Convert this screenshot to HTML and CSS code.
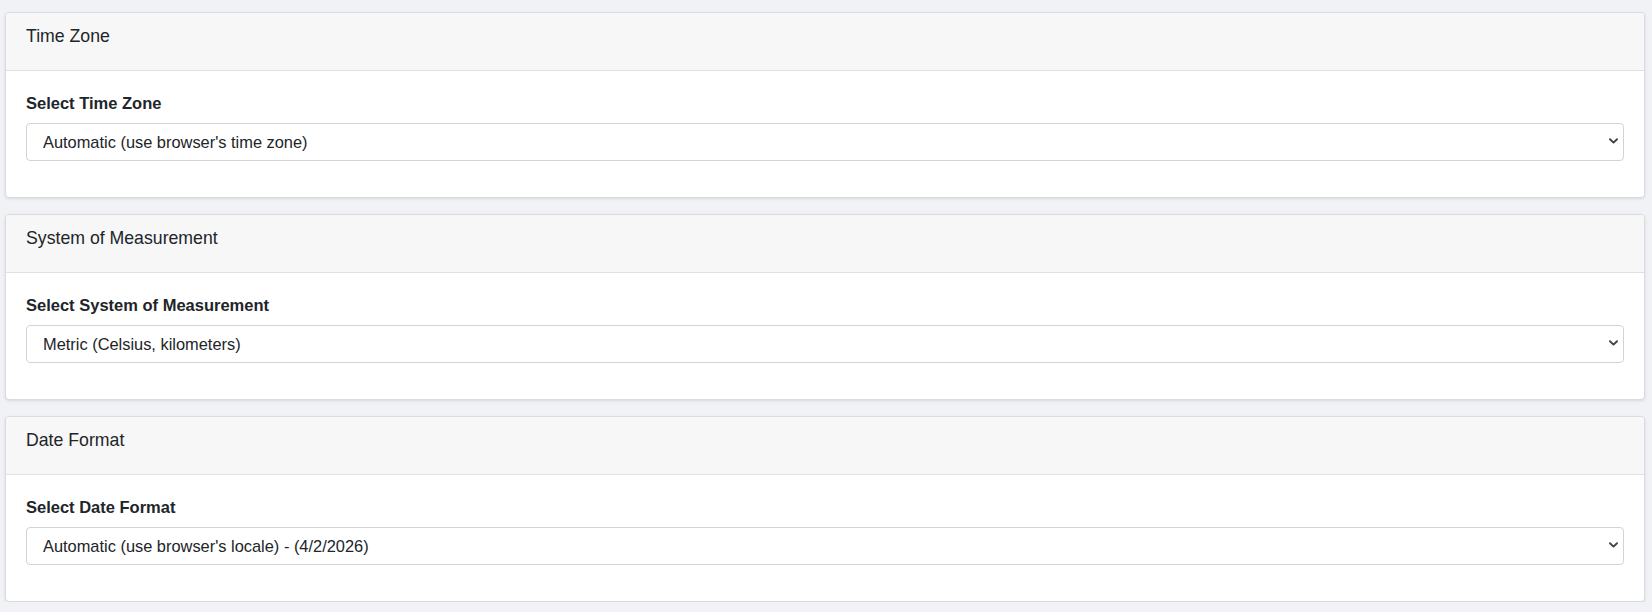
FILE: index.html
```html
<!DOCTYPE html>
<html lang="en">
<head>
<meta charset="utf-8">
<title>Settings</title>
<link rel="stylesheet" href="styles.css">
</head>
<body>
<main class="page">
  <section class="card">
    <header class="card-header">Time Zone</header>
    <div class="card-body">
      <label class="field-label" for="tz">Select Time Zone</label>
      <div class="select-wrap">
        <select id="tz" class="select">
          <option>Automatic (use browser's time zone)</option>
        </select>
        <svg class="chevron" width="9" height="6" viewBox="0 0 9 6" aria-hidden="true"><path d="M1 1.2 L4.5 4.6 L8 1.2" fill="none" stroke="#3f444a" stroke-width="1.9" stroke-linecap="round" stroke-linejoin="round"/></svg>
      </div>
    </div>
  </section>
  <section class="card">
    <header class="card-header">System of Measurement</header>
    <div class="card-body">
      <label class="field-label" for="sm">Select System of Measurement</label>
      <div class="select-wrap">
        <select id="sm" class="select">
          <option>Metric (Celsius, kilometers)</option>
        </select>
        <svg class="chevron" width="9" height="6" viewBox="0 0 9 6" aria-hidden="true"><path d="M1 1.2 L4.5 4.6 L8 1.2" fill="none" stroke="#3f444a" stroke-width="1.9" stroke-linecap="round" stroke-linejoin="round"/></svg>
      </div>
    </div>
  </section>
  <section class="card">
    <header class="card-header">Date Format</header>
    <div class="card-body">
      <label class="field-label" for="df">Select Date Format</label>
      <div class="select-wrap">
        <select id="df" class="select">
          <option>Automatic (use browser's locale) - (4/2/2026)</option>
        </select>
        <svg class="chevron" width="9" height="6" viewBox="0 0 9 6" aria-hidden="true"><path d="M1 1.2 L4.5 4.6 L8 1.2" fill="none" stroke="#3f444a" stroke-width="1.9" stroke-linecap="round" stroke-linejoin="round"/></svg>
      </div>
    </div>
  </section>
</main>
</body>
</html>
```

FILE: styles.css
```css
* { box-sizing: border-box; }

html, body {
  margin: 0;
  padding: 0;
  background: #f1f2f6;
  font-family: "Liberation Sans", Arial, Helvetica, sans-serif;
  color: #212529;
}

.page {
  padding: 12px 7px 0 5px;
  display: flex;
  flex-direction: column;
  gap: 16px;
}

.card {
  background: #ffffff;
  border: 1px solid #dadbde;
  border-radius: 4px;
  box-shadow: 0 1px 3px rgba(0, 0, 0, 0.1);
  overflow: hidden;
}

.card-header {
  background: #f7f7f7;
  border-bottom: 1px solid #dfe0e2;
  padding: 11px 20px 22px;
  font-size: 17.7px;
  line-height: 24px;
}

.card-body {
  padding: 20px 20px 36px;
}

.field-label {
  display: block;
  font-size: 16.5px;
  font-weight: bold;
  line-height: 24px;
  margin-bottom: 8px;
}

.select-wrap {
  position: relative;
}

.select {
  display: block;
  width: 100%;
  height: 38px;
  margin: 0;
  padding: 0 32px 0 16px;
  border: 1px solid #ced4da;
  border-radius: 4px;
  background: #ffffff;
  font-family: "Liberation Sans", Arial, Helvetica, sans-serif;
  font-size: 16.4px;
  color: #212529;
  -webkit-appearance: none;
  appearance: none;
  outline: none;
}

.chevron {
  position: absolute;
  right: 6px;
  top: 15px;
  pointer-events: none;
}
```
